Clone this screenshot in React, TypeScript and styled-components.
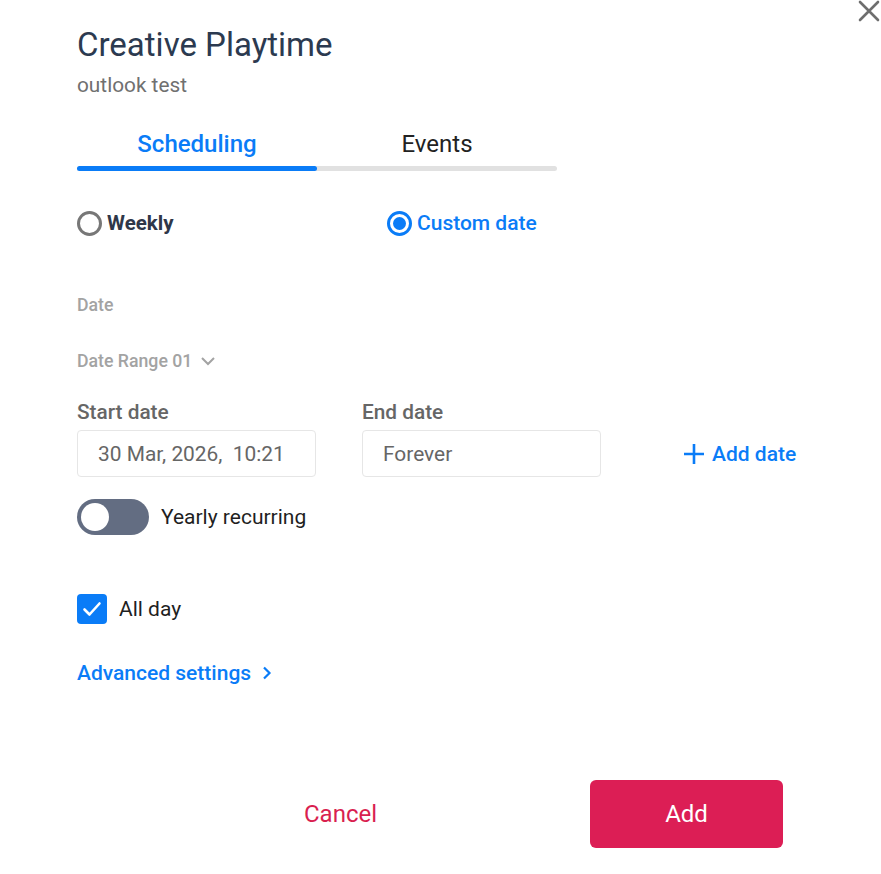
import React, { useState } from "react";
import styled, { createGlobalStyle } from "styled-components";

const GlobalStyle = createGlobalStyle`
  body {
    margin: 0;
    background: #ffffff;
    font-family: Roboto, "Liberation Sans", sans-serif;
  }
`;

const App = () => {
  const [tab, setTab] = useState(0);
  const [mode, setMode] = useState("custom");
  const [yearly, setYearly] = useState(false);
  const [allDay, setAllDay] = useState(true);

  return (
    <Page>
      <GlobalStyle />
      <Close aria-label="close">
        <svg width="22" height="22" viewBox="0 0 22 22">
          <path d="M2 2 L20 20 M20 2 L2 20" stroke="#6e6e6e" strokeWidth="2.6" strokeLinecap="round" />
        </svg>
      </Close>

      <Title>Creative Playtime</Title>
      <Subtitle>outlook test</Subtitle>

      <Tabs>
        <TabRow>
          <Tab active={tab == 0} onClick={() => setTab(0)}>Scheduling</Tab>
          <Tab active={tab == 1} onClick={() => setTab(1)}>Events</Tab>
        </TabRow>
        <TabBar>
          <TabFill style={{ marginLeft: tab * 240 }} />
        </TabBar>
      </Tabs>

      <RadioRow>
        <RadioItem onClick={() => setMode("weekly")}>
          <RadioCircle checked={mode == "weekly"} />
          <RadioLabel checked={mode == "weekly"}>Weekly</RadioLabel>
        </RadioItem>
        <RadioItem onClick={() => setMode("custom")}>
          <RadioCircle checked={mode == "custom"} />
          <RadioLabel checked={mode == "custom"}>Custom date</RadioLabel>
        </RadioItem>
      </RadioRow>

      <SectionLabel>Date</SectionLabel>
      <RangeLabel>
        Date Range 01
        <svg width="18" height="18" viewBox="0 0 18 18">
          <path d="M3 6 L9 12 L15 6" fill="none" stroke="#a3a3a3" strokeWidth="2" />
        </svg>
      </RangeLabel>

      <DateRow>
        <Field>
          <FieldLabel>Start date</FieldLabel>
          <Input>30 Mar, 2026,&nbsp; 10:21</Input>
        </Field>
        <Field>
          <FieldLabel>End date</FieldLabel>
          <Input>Forever</Input>
        </Field>
        <AddDate>
          <svg width="22" height="22" viewBox="0 0 22 22">
            <path d="M11 1 V21 M1 11 H21" stroke="#0a7cf7" strokeWidth="2.6" />
          </svg>
          Add date
        </AddDate>
      </DateRow>

      <ToggleRow onClick={() => setYearly(!yearly)}>
        <Track on={yearly}>
          <Knob on={yearly} />
        </Track>
        <OptionText>Yearly recurring</OptionText>
      </ToggleRow>

      <CheckRow onClick={() => setAllDay(!allDay)}>
        <CheckBox checked={allDay}>
          {allDay && (
            <svg width="22" height="22" viewBox="0 0 22 22">
              <path d="M3.5 11.5 L8.5 16.5 L18.5 5.5" fill="none" stroke="#ffffff" strokeWidth="2.6" strokeLinecap="round" strokeLinejoin="round" />
            </svg>
          )}
        </CheckBox>
        <OptionText>All day</OptionText>
      </CheckRow>

      <Advanced>
        Advanced settings
        <svg width="14" height="16" viewBox="0 0 14 16">
          <path d="M4 2.5 L9.5 8 L4 13.5" fill="none" stroke="#0a7cf7" strokeWidth="2.2" />
        </svg>
      </Advanced>

      <Footer>
        <CancelButton>Cancel</CancelButton>
        <AddButton>Add</AddButton>
      </Footer>
    </Page>
  );
};

const Page = styled.div`
  position: relative;
  width: 881px;
  height: 874px;
  box-sizing: border-box;
  padding: 25px 0 0 77px;
  overflow: hidden;
`;

const Close = styled.div`
  position: absolute;
  top: 0;
  right: 1px;
  width: 22px;
  height: 22px;
  cursor: pointer;
`;

const Title = styled.h1`
  margin: 0;
  font-size: 33px;
  line-height: 40px;
  font-weight: 400;
  color: #2c3a50;
`;

const Subtitle = styled.div`
  margin-top: 6px;
  font-size: 20.8px;
  line-height: 28px;
  color: #707070;
`;

const Tabs = styled.div`
  width: 480px;
  margin-top: 29px;
`;

const TabRow = styled.div`
  display: flex;
`;

const Tab = styled.div<{ active: boolean }>`
  flex: 1;
  text-align: center;
  font-size: 24px;
  line-height: 32px;
  font-weight: ${(p) => (p.active ? 500 : 400)};
  color: ${(p) => (p.active ? "#0a7cf7" : "#222222")};
  cursor: pointer;
`;

const TabBar = styled.div`
  margin-top: 6px;
  height: 5px;
  border-radius: 3px;
  background: #e1e1e1;
`;

const TabFill = styled.div`
  width: 240px;
  height: 5px;
  border-radius: 3px;
  background: #0a7cf7;
`;

const RadioRow = styled.div`
  display: grid;
  grid-template-columns: 310px 310px;
  margin-top: 39px;
`;

const RadioItem = styled.div`
  display: flex;
  align-items: center;
  gap: 5px;
  height: 26px;
  cursor: pointer;
`;

const RadioCircle = styled.div<{ checked: boolean }>`
  width: 25px;
  height: 25px;
  box-sizing: border-box;
  border-radius: 50%;
  border: 3px solid ${(p) => (p.checked ? "#0a7cf7" : "#777777")};
  display: flex;
  align-items: center;
  justify-content: center;

  &::after {
    content: "";
    display: ${(p) => (p.checked ? "block" : "none")};
    width: 13px;
    height: 13px;
    border-radius: 50%;
    background: #0a7cf7;
  }
`;

const RadioLabel = styled.span<{ checked: boolean }>`
  font-size: ${(p) => (p.checked ? "21px" : "20.5px")};
  font-weight: ${(p) => (p.checked ? 500 : 700)};
  color: ${(p) => (p.checked ? "#0a7cf7" : "#2f3749")};
`;

const SectionLabel = styled.div`
  margin-top: 58px;
  font-size: 17.7px;
  line-height: 22px;
  font-weight: 500;
  color: #a3a3a3;
`;

const RangeLabel = styled.div`
  margin-top: 34px;
  display: flex;
  align-items: center;
  gap: 7px;
  font-size: 17.7px;
  line-height: 22px;
  font-weight: 500;
  color: #a3a3a3;
`;

const DateRow = styled.div`
  display: flex;
  align-items: flex-end;
  margin-top: 27px;
  gap: 46px;
`;

const Field = styled.div`
  width: 239px;
`;

const FieldLabel = styled.div`
  font-size: 20.8px;
  line-height: 26px;
  font-weight: 500;
  color: #666666;
  margin-bottom: 5px;
`;

const Input = styled.div`
  height: 47px;
  box-sizing: border-box;
  border: 1px solid #e6e6e6;
  border-radius: 4px;
  padding: 0 0 0 20px;
  display: flex;
  align-items: center;
  font-size: 20.9px;
  color: #666666;
  white-space: nowrap;
`;

const AddDate = styled.div`
  height: 47px;
  margin-left: 36px;
  display: flex;
  align-items: center;
  gap: 7px;
  font-size: 21px;
  font-weight: 500;
  color: #0a7cf7;
  cursor: pointer;
`;

const ToggleRow = styled.div`
  margin-top: 22px;
  display: flex;
  align-items: center;
  gap: 12px;
  cursor: pointer;
`;

const Track = styled.div<{ on: boolean }>`
  width: 72px;
  height: 36px;
  border-radius: 18px;
  background: ${(p) => (p.on ? "#0a7cf7" : "#636d82")};
  display: flex;
  align-items: center;
  padding: 0 4px;
  box-sizing: border-box;
  justify-content: ${(p) => (p.on ? "flex-end" : "flex-start")};
`;

const Knob = styled.div<{ on: boolean }>`
  width: 28px;
  height: 28px;
  border-radius: 50%;
  background: #ffffff;
`;

const OptionText = styled.span`
  font-size: 21px;
  color: #1f1f1f;
`;

const CheckRow = styled.div`
  margin-top: 59px;
  display: flex;
  align-items: center;
  gap: 12px;
  cursor: pointer;
`;

const CheckBox = styled.div<{ checked: boolean }>`
  width: 30px;
  height: 30px;
  box-sizing: border-box;
  border-radius: 4px;
  background: ${(p) => (p.checked ? "#0a7cf7" : "#ffffff")};
  border: ${(p) => (p.checked ? "none" : "2px solid #777777")};
  display: flex;
  align-items: center;
  justify-content: center;
`;

const Advanced = styled.div`
  margin-top: 37px;
  display: flex;
  align-items: center;
  gap: 9px;
  font-size: 21px;
  line-height: 24px;
  font-weight: 500;
  color: #0a7cf7;
  cursor: pointer;
`;

const Footer = styled.div`
  margin-top: 95px;
  margin-left: 167px;
  display: flex;
  gap: 153px;
`;

const CancelButton = styled.button`
  width: 193px;
  height: 68px;
  border: none;
  background: transparent;
  font-family: inherit;
  font-size: 24px;
  font-weight: 400;
  color: #d91f50;
  cursor: pointer;
`;

const AddButton = styled.button`
  width: 193px;
  height: 68px;
  border: none;
  border-radius: 6px;
  background: #dc1e55;
  font-family: inherit;
  font-size: 24px;
  font-weight: 400;
  color: #ffffff;
  cursor: pointer;
`;

export default App;
